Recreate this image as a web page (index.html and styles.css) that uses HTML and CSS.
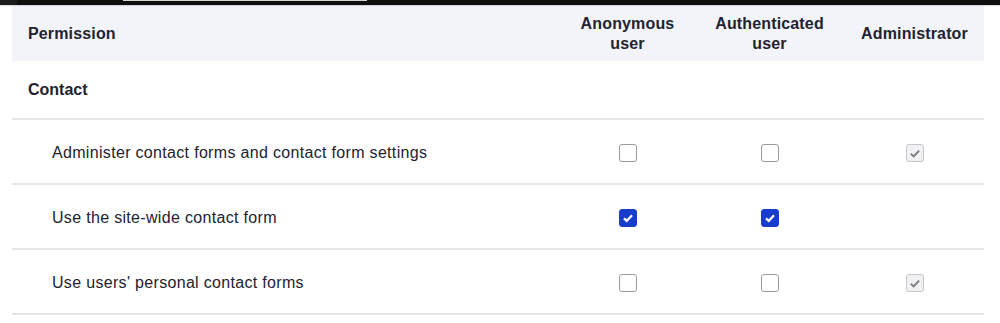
FILE: index.html
```html
<!DOCTYPE html>
<html lang="en">
<head>
    <meta charset="UTF-8">
    <title>Permissions</title>
    <link rel="stylesheet" href="styles.css">
</head>
<body>
    <!-- Toolbar strip at the top -->
    <div class="topbar">
        <span class="topbar-edge"></span>
        <span class="topbar-line"></span>
    </div>

    <table class="permissions">
        <colgroup>
            <col>
            <col class="col-anon">
            <col class="col-auth">
            <col class="col-admin">
        </colgroup>
        <thead>
            <tr>
                <th class="perm-title">Permission</th>
                <th class="role">Anonymous<br>user</th>
                <th class="role">Authenticated<br>user</th>
                <th class="role">Administrator</th>
            </tr>
        </thead>
        <tbody>
            <tr class="module-row">
                <td colspan="4">Contact</td>
            </tr>
            <tr>
                <td class="perm-name">Administer contact forms and contact form settings</td>
                <td class="check-cell"><span class="checkbox"></span></td>
                <td class="check-cell"><span class="checkbox"></span></td>
                <td class="check-cell">
                    <span class="checkbox is-disabled">
                        <svg viewBox="0 0 18 18" width="17" height="17"><path d="M4.3 9.3 L7.5 12.3 L13.6 5.7" fill="none" stroke="#7d7d86" stroke-width="2.2"/></svg>
                    </span>
                </td>
            </tr>
            <tr>
                <td class="perm-name">Use the site-wide contact form</td>
                <td class="check-cell">
                    <span class="checkbox is-checked">
                        <svg viewBox="0 0 18 18" width="18" height="18"><path d="M4.5 9.4 L7.6 12.3 L13.5 5.8" fill="none" stroke="#fff" stroke-width="2.6"/></svg>
                    </span>
                </td>
                <td class="check-cell">
                    <span class="checkbox is-checked">
                        <svg viewBox="0 0 18 18" width="18" height="18"><path d="M4.5 9.4 L7.6 12.3 L13.5 5.8" fill="none" stroke="#fff" stroke-width="2.6"/></svg>
                    </span>
                </td>
                <td class="check-cell"></td>
            </tr>
            <tr>
                <td class="perm-name">Use users' personal contact forms</td>
                <td class="check-cell"><span class="checkbox"></span></td>
                <td class="check-cell"><span class="checkbox"></span></td>
                <td class="check-cell">
                    <span class="checkbox is-disabled">
                        <svg viewBox="0 0 18 18" width="17" height="17"><path d="M4.3 9.3 L7.5 12.3 L13.6 5.7" fill="none" stroke="#7d7d86" stroke-width="2.2"/></svg>
                    </span>
                </td>
            </tr>
        </tbody>
    </table>
</body>
</html>
```

FILE: styles.css
```css
* {
    margin: 0;
    padding: 0;
    box-sizing: border-box;
}

body {
    background-color: #fff;
    color: #222330;
    font-family: "Liberation Sans", Arial, sans-serif;
    font-size: 16px;
}

/* Top toolbar strip */
.topbar {
    height: 5px;
    background-color: #0f0f0f;
    display: flex;
    box-shadow: 0 1px 1px rgba(0, 0, 0, 0.12);
    position: relative;
}

.topbar-edge {
    width: 17px;
    background-color: #1c1c1c;
}

.topbar-line {
    margin-left: 106px;
    width: 244px;
    height: 1px;
    background-color: #d6d6d6;
}

/* Permission table */
.permissions {
    width: 972px;
    margin: 0 12px;
    border-collapse: collapse;
    table-layout: fixed;
}

.col-anon { width: 133px; }
.col-auth { width: 151px; }
.col-admin { width: 139px; }

thead tr {
    background-color: #f3f4f9;
    height: 56px;
}

th {
    font-weight: bold;
    line-height: 20.5px;
    padding: 2px 0 0;
    vertical-align: middle;
    letter-spacing: 0.15px;
}

.perm-title {
    text-align: left;
    padding-left: 16px;
}

.role {
    text-align: center;
}

td {
    vertical-align: middle;
    padding: 0;
}

.module-row td {
    height: 58px;
    padding-left: 16px;
    font-weight: bold;
    border-bottom: 2px solid #e6e6ea;
}

tbody tr:not(.module-row) td {
    height: 65px;
    padding-top: 3px;
    border-bottom: 2px solid #e6e6ea;
}

.perm-name {
    padding-left: 40px !important;
    letter-spacing: 0.32px;
}

.check-cell {
    text-align: center;
}

/* Checkboxes */
.checkbox {
    display: inline-flex;
    align-items: center;
    justify-content: center;
    width: 18px;
    height: 18px;
    border: 1px solid #9a9aa0;
    border-radius: 3px;
    background-color: #fff;
    vertical-align: middle;
}

.checkbox.is-checked {
    background-color: #183dcc;
    border-color: #183dcc;
}

.checkbox.is-disabled {
    background-color: #f1f1f3;
    border-color: #c8c8cc;
}
```
